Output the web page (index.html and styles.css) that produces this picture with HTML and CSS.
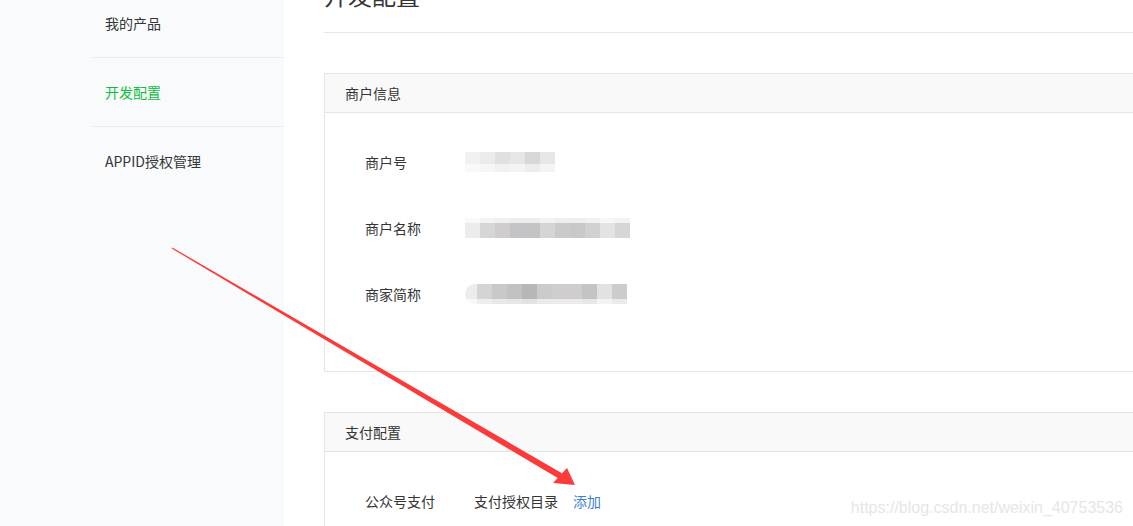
FILE: index.html
```html
<!DOCTYPE html>
<html>
<head>
<meta charset="utf-8">
<title>开发配置</title>
<link rel="stylesheet" href="styles.css">
</head>
<body>
<div class="layout">
  <div class="sidebar">
    <ul class="menu">
      <li class="menuItem">我的产品</li>
      <li class="menuItem current">开发配置</li>
      <li class="menuItem">APPID授权管理</li>
    </ul>
  </div>

  <div class="main">
    <h2 class="pageTitle">开发配置</h2>

    <div class="panel">
      <div class="panelHead">商户信息</div>
      <div class="panelBody">
        <div class="row"><span class="label">商户号</span><span class="blur blurShort"></span></div>
        <div class="row"><span class="label">商户名称</span><span class="blur blurLong"></span></div>
        <div class="row"><span class="label">商家简称</span><span class="blur blurLong blurRound"></span></div>
      </div>
    </div>

    <div class="panel">
      <div class="panelHead">支付配置</div>
      <div class="panelBody">
        <div class="row"><span class="label wide">公众号支付</span><span>支付授权目录</span><a class="action" href="#">添加</a></div>
      </div>
    </div>
  </div>
</div>

<!-- annotation drawn over the screenshot -->
<svg class="arrow" width="1133" height="526" viewBox="0 0 1133 526">
  <polygon fill="#fb3a3a" points="171.7,248.5 172.3,247.5 562,473.2 559,478.8"/>
  <polygon fill="#fb3a3a" points="575,485 553,483 567,468"/>
</svg>

<div class="watermark">https://blog.csdn.net/weixin_40753536</div>
</body>
</html>
```

FILE: styles.css
```css
html, body { margin: 0; padding: 0; }
body { width: 1133px; height: 526px; overflow: hidden; position: relative; background: #fff; color: #353535; font-family: "Noto Sans CJK SC", "Liberation Sans", sans-serif; font-size: 14px; }

.layout { display: flex; align-items: stretch; min-height: 526px; }

.sidebar { flex: 0 0 284px; background: #f8fafc; }
.menu { list-style: none; margin: -11px 0 0 92px; padding: 0; }
.menuItem { height: 68px; line-height: 68px; padding-left: 13px; border-bottom: 1px solid #eceef1; color: #353535; }
.menuItem:last-child { border-bottom: none; }
.menuItem.current { color: #0fbf3c; }

.main { flex: 0 0 900px; padding-left: 40px; }
.pageTitle { margin: -17px 0 0; padding-bottom: 25px; line-height: 24px; font-size: 24px; font-weight: normal; color: #353535; border-bottom: 1px solid #e7e7e7; }

.panel { margin-top: 40px; border: 1px solid #e5e5e5; }
.panelHead { height: 38px; line-height: 38px; padding-left: 20px; background: #f9f9f9; border-bottom: 1px solid #e5e5e5; }
.panelBody { padding: 16px 0 44px 40px; }
.row { display: flex; align-items: center; height: 66px; }
.label { width: 100px; }
.label.wide { width: 109px; }
.action { margin-left: 15px; color: #3e7fd2; text-decoration: none; }

.blur { display: block; height: 20px; }
.blurShort { width: 90px; background:
  linear-gradient(to bottom, rgba(255,255,255,0) 0 12px, rgba(255,255,255,.55) 12px 20px),
  linear-gradient(to right, #f1f1f1 0 15px, #ecebe9 15px 30px, #e0e0e2 30px 45px, #e6e6e7 45px 60px, #d8d8db 60px 75px, #e7e7e7 75px 90px); }
.blurLong { width: 165px; background:
  linear-gradient(to bottom, rgba(255,255,255,.7) 0 5px, rgba(255,255,255,0) 5px 20px),
  linear-gradient(to right, #ececec 0 15px, #d6d6d6 15px 30px, #d0cecd 30px 45px, #c4c4c6 45px 75px, #d5d5d6 75px 90px, #cacacc 90px 105px, #c8c8c8 105px 120px, #d1d1d1 120px 135px, #e3e3e3 135px 150px, #d6d6d6 150px 165px); }
.blurRound { width: 162px; border-radius: 10px 0 0 10px; background:
  linear-gradient(to bottom, rgba(255,255,255,0) 0 15px, rgba(255,255,255,.6) 15px 20px),
  linear-gradient(to right, #ececec 0 12px, #d4d4d4 12px 27px, #c9c9c8 27px 42px, #c2c2c2 42px 57px, #b8b7b7 57px 72px, #cbcbcb 72px 87px, #cfcdce 87px 117px, #c4c4c4 117px 132px, #e2e2e2 132px 147px, #cccccc 147px 162px); }

.arrow { position: absolute; left: 0; top: 0; pointer-events: none; }
.watermark { position: absolute; right: 10px; top: 499px; font-family: "Liberation Sans", Arial, sans-serif; font-size: 16px; color: #e6e6e6; }
```
